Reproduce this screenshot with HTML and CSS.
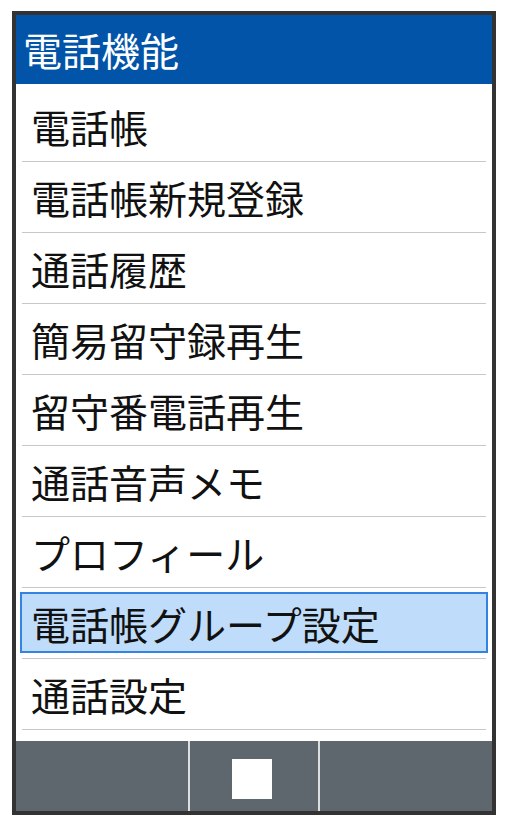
FILE: index.html
```html
<!DOCTYPE html>
<html lang="ja">
<head>
    <meta charset="UTF-8">
    <meta name="viewport" content="width=device-width, initial-scale=1.0">
    <title>電話機能</title>
    <link rel="stylesheet" href="styles.css">
</head>
<body>
    <div class="phone">
        <h1 class="title">電話機能</h1>
        <ul class="menu">
            <li class="item"><span>電話帳</span></li>
            <li class="item"><span>電話帳新規登録</span></li>
            <li class="item"><span>通話履歴</span></li>
            <li class="item"><span>簡易留守録再生</span></li>
            <li class="item"><span>留守番電話再生</span></li>
            <li class="item"><span>通話音声メモ</span></li>
            <li class="item"><span>プロフィール</span></li>
            <li class="item selected"><span>電話帳グループ設定</span></li>
            <li class="item"><span>通話設定</span></li>
        </ul>
        <div class="softkeys">
            <div class="key"></div>
            <div class="key"><span class="center-btn"></span></div>
            <div class="key"></div>
        </div>
    </div>
</body>
</html>
```

FILE: styles.css
```css
body {
    margin: 0;
    background-color: #fff;
    font-family: "Noto Sans CJK JP", "Noto Sans", sans-serif;
}
.phone {
    margin: 11px 0 0 12px;
    width: 476px;
    height: 796px;
    border: 4px solid #333;
    display: flex;
    flex-direction: column;
    background-color: #fff;
}
.title {
    margin: 0;
    height: 69px;
    padding-left: 7px;
    background-color: #0254a8;
    color: #fff;
    font-size: 39px;
    font-weight: normal;
    line-height: 69px;
}
.menu {
    list-style: none;
    margin: 0;
    padding: 7px 0 0;
    flex: 1;
}
.item {
    margin: 0 6px;
    height: 70px;
    border-bottom: 1px solid #c6c8c8;
    display: flex;
    align-items: center;
    font-size: 39px;
    color: #111;
}
.item span {
    padding-left: 9px;
}
.item.selected {
    position: relative;
}
.item.selected::before {
    content: "";
    position: absolute;
    left: -2px;
    right: -2px;
    top: 4px;
    bottom: 5px;
    background-color: #bfdcfa;
    border: 2px solid #3583e0;
}
.item.selected span {
    position: relative;
}
.softkeys {
    height: 70px;
    display: grid;
    grid-template-columns: 172px 128px 172px;
    column-gap: 2px;
    background-color: #dcdfe0;
}
.key {
    background-color: #5e676e;
    display: flex;
    align-items: center;
    justify-content: center;
    padding-top: 6px;
}
.center-btn {
    width: 40px;
    height: 40px;
    background-color: #fff;
    margin-right: 4px;
}
```
